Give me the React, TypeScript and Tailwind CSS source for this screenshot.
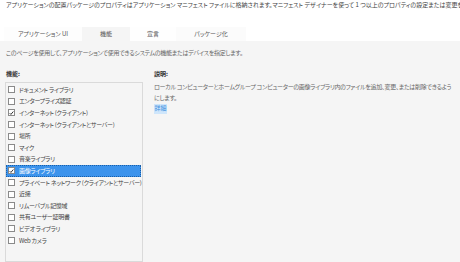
import React from "react";

const items = [
  { label: "ドキュメント ライブラリ", checked: false },
  { label: "エンタープライズ認証", checked: false },
  { label: "インターネット (クライアント)", checked: true },
  { label: "インターネット (クライアントとサーバー)", checked: false },
  { label: "場所", checked: false },
  { label: "マイク", checked: false },
  { label: "音楽ライブラリ", checked: false },
  { label: "画像ライブラリ", checked: true, selected: true },
  { label: "プライベート ネットワーク (クライアントとサーバー)", checked: false },
  { label: "近接", checked: false },
  { label: "リムーバブル記憶域", checked: false },
  { label: "共有ユーザー証明書", checked: false },
  { label: "ビデオ ライブラリ", checked: false },
  { label: "Web カメラ", checked: false },
];

function Box({ checked }: { checked: boolean }) {
  return (
    <div className="w-[7px] h-[7px] border border-[#8a8a8a] bg-white flex items-center justify-center shrink-0">
      {checked && (
        <svg width="6" height="6" viewBox="0 0 6 6">
          <path d="M0.8 3.2 L2.3 4.7 L5.2 1.2" stroke="#222" strokeWidth="1.1" fill="none" />
        </svg>
      )}
    </div>
  );
}

export default function App() {
  return (
    <div
      className="w-[460px] h-[262px] overflow-hidden bg-white flex flex-col text-[6px] leading-[8px] text-[#444] [font-feature-settings:'palt']"
      style={{ fontFamily: '"Noto Sans CJK JP", "Noto Sans", sans-serif' }}
    >
      <div className="pl-[6px] pt-[1px] h-[27px] whitespace-nowrap overflow-hidden text-[#444]">
        アプリケーションの配置パッケージのプロパティはアプリケーション マニフェスト ファイルに格納されます。マニフェスト デザイナーを使って 1 つ以上のプロパティの設定または変更を行うことができます。
      </div>
      <div className="flex h-[14px] pl-[4px] text-[#555]">
        <div className="w-[78px] flex items-center justify-center bg-[#fdfdfd]">アプリケーション UI</div>
        <div className="w-[48px] flex items-center justify-center bg-[#f5f5f5]">機能</div>
        <div className="w-[46px] flex items-center justify-center bg-[#fefefe]">宣言</div>
        <div className="w-[70px] flex items-center justify-center bg-[#fbfbfb]">パッケージ化</div>
      </div>
      <div className="flex-1 bg-[#f5f5f5] flex flex-col">
        <div className="pl-[6px] pt-[8px] h-[29px] text-[#666] tracking-[-0.3px] whitespace-nowrap">
          このページを使用して、アプリケーションで使用できるシステムの機能またはデバイスを指定します。
        </div>
        <div className="flex flex-1">
          <div className="w-[143px] pl-[5px] flex flex-col">
            <div className="pl-[1px] h-[12px] font-bold text-[#333]">機能:</div>
            <div className="flex-1 border border-[#dadada] pt-[1px] pr-[1px] tracking-[-0.3px]">
              {items.map((it) => (
                <div
                  key={it.label}
                  className={
                    "h-[11.6px] flex items-center gap-[4px] pl-[2px] whitespace-nowrap " +
                    (it.selected
                      ? "bg-[#3c93ec] text-white outline outline-1 outline-dotted outline-[#1a5fa8] -outline-offset-1"
                      : "")
                  }
                >
                  <Box checked={it.checked} />
                  <span>{it.label}</span>
                </div>
              ))}
            </div>
          </div>
          <div className="pl-[11px] flex flex-col">
            <div className="h-[11px] font-bold text-[#333]">説明:</div>
            <div className="leading-[11px] text-[#666] tracking-[-0.3px]">
              <div className="whitespace-nowrap">
                ローカル コンピューターとホームグループ コンピューターの画像ライブラリ内のファイルを追加、変更、または削除できるよう
              </div>
              <div className="whitespace-nowrap">にします。</div>
            </div>
            <div className="mt-[1px] h-[10px] flex">
              <span className="bg-[#cfe6fb] text-[#3a8fde] px-[0.5px]">詳細</span>
            </div>
          </div>
        </div>
      </div>
    </div>
  );
}
